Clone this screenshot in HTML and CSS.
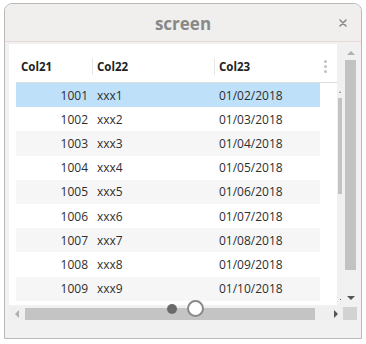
FILE: index.html
```html
<!DOCTYPE html>
<html>
<head>
<meta charset="utf-8">
<link rel="stylesheet" href="styles.css">
</head>
<body>
<div class="window">
  <div class="titlebar">
    <span class="title">screen</span>
    <svg class="close" width="8" height="8" viewBox="0 0 8 8"><path d="M1 1L7 7M7 1L1 7" stroke="#8a8a8a" stroke-width="1.6" stroke-linecap="round"/></svg>
  </div>
  <div class="content">
    <div class="grid">
      <div class="panel">
        <div class="tablearea">
          <div class="header">
            <div class="hcell c1">Col21</div>
            <div class="hcell c2">Col22</div>
            <div class="hcell c3">Col23</div>
            <div class="menu"><i></i><i></i><i></i></div>
          </div>
          <div class="rows">
            <div class="row sel"><span class="c1 num">1001</span><span class="c2">xxx1</span><span class="c3">01/02/2018</span></div>
            <div class="row"><span class="c1 num">1002</span><span class="c2">xxx2</span><span class="c3">01/03/2018</span></div>
            <div class="row alt"><span class="c1 num">1003</span><span class="c2">xxx3</span><span class="c3">01/04/2018</span></div>
            <div class="row"><span class="c1 num">1004</span><span class="c2">xxx4</span><span class="c3">01/05/2018</span></div>
            <div class="row alt"><span class="c1 num">1005</span><span class="c2">xxx5</span><span class="c3">01/06/2018</span></div>
            <div class="row"><span class="c1 num">1006</span><span class="c2">xxx6</span><span class="c3">01/07/2018</span></div>
            <div class="row alt"><span class="c1 num">1007</span><span class="c2">xxx7</span><span class="c3">01/08/2018</span></div>
            <div class="row"><span class="c1 num">1008</span><span class="c2">xxx8</span><span class="c3">01/09/2018</span></div>
            <div class="row alt"><span class="c1 num">1009</span><span class="c2">xxx9</span><span class="c3">01/10/2018</span></div>
          </div>
        </div>
        <div class="innerscroll">
          <span class="mini-up"></span>
          <span class="mini-thumb"></span>
          <span class="mini-dot"></span>
        </div>
      </div>
      <div class="vscroll">
        <span class="arrow up"></span>
        <span class="vthumb"></span>
        <span class="arrow down"></span>
      </div>
      <div class="hscroll">
        <span class="arrow left"></span>
        <span class="hthumb"></span>
        <span class="arrow right"></span>
        <span class="knob dot"></span>
        <span class="knob ring"></span>
      </div>
      <div class="corner"></div>
    </div>
  </div>
</div>
</body>
</html>
```
FILE: styles.css
```css
html, body {
  margin: 0;
  padding: 0;
  background: #ffffff;
}
body {
  width: 366px;
  height: 344px;
  font-family: "Open Sans", "DejaVu Sans", sans-serif;
  padding: 3px 0 0 4px;
  box-sizing: border-box;
}
.window {
  width: 358px;
  height: 336px;
  border: 1px solid #b9b9b9;
  border-radius: 8px 8px 0 0;
  box-sizing: border-box;
  background: #f1f1f1;
  overflow: hidden;
  display: flex;
  flex-direction: column;
}
.titlebar {
  height: 38px;
  flex: none;
  background: #f0efee;
  border-bottom: 1px solid #e6d9d6;
  box-sizing: border-box;
  display: flex;
  align-items: center;
  justify-content: center;
  position: relative;
}
.title {
  font-weight: bold;
  font-size: 17px;
  color: #888888;
  margin-top: 1px;
}
.close {
  position: absolute;
  right: 14px;
  top: 15px;
}
.content {
  padding: 2px 4px 0 4px;
}
.grid {
  display: grid;
  grid-template-columns: 334px 14px;
  grid-template-rows: 261px 13px;
  row-gap: 2px;
}
.panel {
  background: #ffffff;
  display: flex;
}
.tablearea {
  width: 328px;
  display: flex;
  flex-direction: column;
}
.header {
  height: 39px;
  margin-left: 7px;
  border-bottom: 1.5px solid #dddddd;
  box-sizing: border-box;
  display: flex;
  align-items: center;
  position: relative;
  font-weight: bold;
  font-size: 11.5px;
  color: #222;
  padding-top: 6px;
}
.hcell {
  padding-left: 5px;
  box-sizing: border-box;
  height: 17px;
  line-height: 17px;
}
.hcell.c2, .hcell.c3 {
  border-left: 1px solid #e6e6e6;
  padding-left: 4px;
}
.c1 { width: 76px; }
.c2 { width: 122px; }
.c3 { width: 106px; }
.menu {
  display: flex;
  flex-direction: column;
  gap: 2px;
  margin-left: 4px;
}
.menu i {
  display: block;
  width: 3px;
  height: 3px;
  border-radius: 50%;
  background: #c4c4c4;
}
.rows {
  margin-left: 7px;
  width: 304px;
  font-size: 12px;
  color: #2e2e2e;
}
.row {
  height: 24.2px;
  display: flex;
  align-items: center;
}
.row span {
  box-sizing: border-box;
}
.row .num {
  text-align: right;
  padding-right: 4px;
}
.row .c2 { padding-left: 5px; }
.row .c3 { padding-left: 5px; }
.row.sel { background: #bee0f9; }
.row.alt { background: #f6f6f6; }
.innerscroll {
  width: 6px;
  background: #f0f0f0;
  position: relative;
  display: flex;
  flex-direction: column;
  align-items: center;
}
.mini-up {
  margin-top: 47px;
  width: 0;
  height: 0;
  border-left: 1.5px solid transparent;
  border-right: 1.5px solid transparent;
  border-bottom: 2px solid #888;
}
.mini-thumb {
  margin-top: 5px;
  width: 4px;
  height: 96px;
  background: #c3c3c3;
}
.mini-dot {
  margin-top: 105px;
  width: 1px;
  height: 1px;
  background: #666;
}
.vscroll {
  display: flex;
  flex-direction: column;
  align-items: center;
  padding-left: 1px;
}
.vthumb {
  width: 11px;
  height: 210px;
  background: #c2c2c2;
  margin-top: 5px;
}
.arrow {
  display: block;
  width: 0;
  height: 0;
}
.arrow.up {
  margin-top: 7px;
  border-left: 4px solid transparent;
  border-right: 4px solid transparent;
  border-bottom: 4px solid #b0b0b0;
}
.arrow.down {
  margin-top: 26px;
  border-left: 4px solid transparent;
  border-right: 4px solid transparent;
  border-top: 4px solid #555555;
}
.hscroll {
  background: #efefef;
  display: flex;
  align-items: center;
  position: relative;
}
.arrow.left {
  margin-left: 6px;
  border-top: 4px solid transparent;
  border-bottom: 4px solid transparent;
  border-right: 4px solid #b0b0b0;
}
.hthumb {
  margin-left: 6px;
  width: 290px;
  height: 12px;
  margin-top: 1px;
  background: #c4c4c4;
}
.arrow.right {
  margin-left: 19px;
  border-top: 4px solid transparent;
  border-bottom: 4px solid transparent;
  border-left: 4px solid #555555;
}
.corner {
  background: #d2d2d2;
  margin-left: 0;
  width: 14px;
}
.knob {
  position: absolute;
  border-radius: 50%;
  box-sizing: border-box;
}
.knob.dot {
  left: 158px;
  top: -3px;
  width: 10px;
  height: 10px;
  background: #6b6b6b;
}
.knob.ring {
  left: 178px;
  top: -7px;
  width: 17px;
  height: 17px;
  background: #ffffff;
  border: 2.5px solid #8a8a8a;
}
```
